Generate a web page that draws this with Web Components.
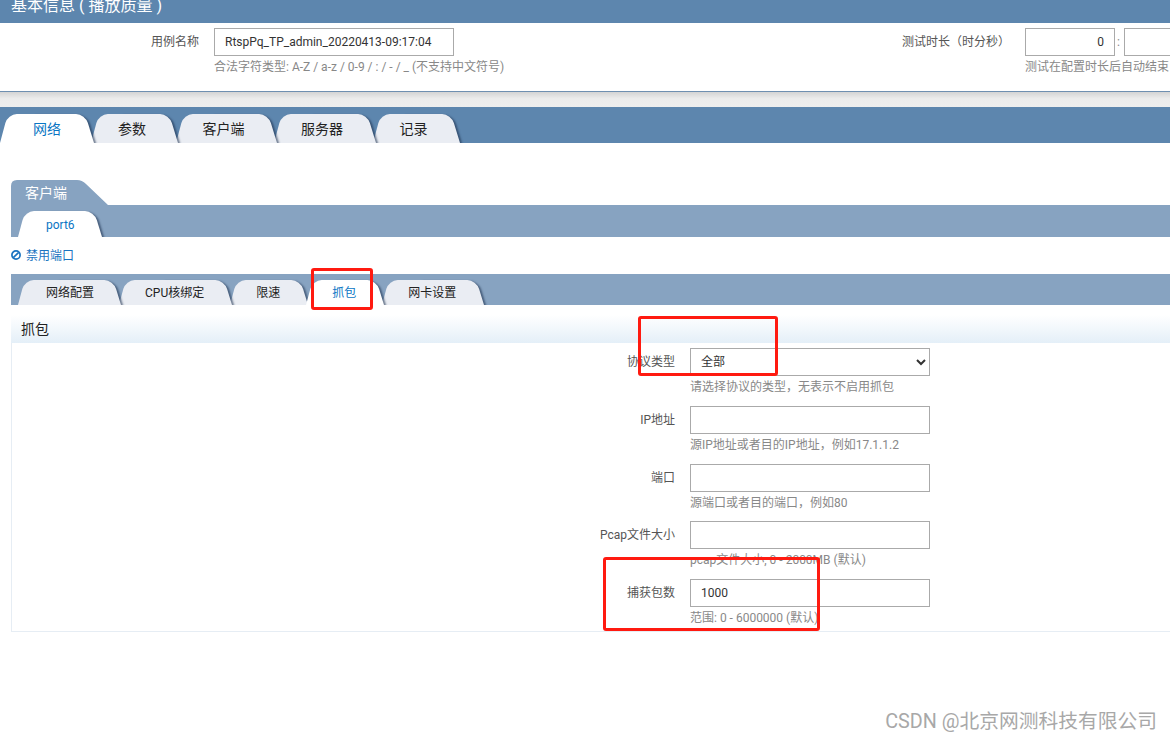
<!DOCTYPE html>
<html lang="zh">
<head>
<meta charset="utf-8">
<title>抓包</title>
<style>
    html, body { margin: 0; background: #fff; }
    body {
        width: 1170px;
        height: 740px;
        overflow: hidden;
        position: relative;
        font-family: Roboto, "Noto Sans CJK SC", sans-serif;
        font-size: 12px;
    }
</style>
</head>
<body>
<info-panel></info-panel>

<tab-strip class="main">
    <tab-item active>网络</tab-item>
    <tab-item>参数</tab-item>
    <tab-item>客户端</tab-item>
    <tab-item>服务器</tab-item>
    <tab-item>记录</tab-item>
</tab-strip>

<client-pane>
    <tab-strip class="sub" slot="ports" style="height:32px;--tab-h:26px">
        <tab-item active>port6</tab-item>
    </tab-strip>
    <tab-strip class="sub" slot="tabs">
        <tab-item>网络配置</tab-item>
        <tab-item>CPU核绑定</tab-item>
        <tab-item>限速</tab-item>
        <tab-item active>抓包</tab-item>
        <tab-item>网卡设置</tab-item>
    </tab-strip>
    <form-section title="抓包">
        <form-field label="协议类型" hint="请选择协议的类型，无表示不启用抓包" type="select" value="全部"></form-field>
        <form-field label="IP地址" hint="源IP地址或者目的IP地址，例如17.1.1.2"></form-field>
        <form-field label="端口" hint="源端口或者目的端口，例如80"></form-field>
        <form-field label="Pcap文件大小" hint="pcap文件大小, 0 - 2000MB (默认)"></form-field>
        <form-field label="捕获包数" hint="范围: 0 - 6000000 (默认)" value="1000"></form-field>
    </form-section>
</client-pane>

<red-mark style="left:311px;top:268px;width:62px;height:42px"></red-mark>
<red-mark style="left:638px;top:316px;width:140px;height:60px"></red-mark>
<red-mark style="left:603px;top:557px;width:217px;height:74px"></red-mark>

<water-mark>CSDN @北京网测科技有限公司</water-mark>

<script>
class InfoPanel extends HTMLElement {
    constructor() {
        super();
        this.attachShadow({ mode: 'open' });
        this.shadowRoot.innerHTML = `
            <style>
                :host { display: block; }
                .title {
                    height: 23px;
                    overflow: hidden;
                    background: #5d86ae;
                    color: #fff;
                    font-size: 16px;
                    line-height: 16px;
                    padding-left: 11px;
                }
                .title span { display: block; margin-top: -2px; }
                .body {
                    box-sizing: border-box;
                    height: 69px;
                    padding-top: 5px;
                    border-bottom: 1px solid #6f8fb0;
                    display: grid;
                    grid-template-columns: 199px 255px 556px 105px 55px;
                    color: #555;
                    white-space: nowrap;
                }
                label { text-align: right; line-height: 28px; }
                .box {
                    box-sizing: border-box;
                    height: 28px;
                    line-height: 26px;
                    border: 1px solid #aaa;
                    color: #333;
                    padding: 0 10px;
                    background: #fff;
                }
                .name { margin-left: 15px; }
                .time { margin-left: 15px; width: 90px; }
                .hint { color: #888; line-height: 16px; margin-top: 3px; }
                .num { text-align: right; }
                .next { display: flex; color: #888; line-height: 28px; }
                .next span { flex: none; width: 9px; text-indent: 2px; }
                .next .box { width: 60px; flex: none; }
                .gap {
                    height: 15px;
                    background: linear-gradient(#d4d4d4, #ececec 45%, #eeeeee);
                }
            </style>
            <div class="title"><span>基本信息 ( 播放质量 )</span></div>
            <div class="body">
                <label>用例名称</label>
                <div class="name">
                    <div class="box">RtspPq_TP_admin_20220413-09:17:04</div>
                    <div class="hint">合法字符类型: A-Z / a-z / 0-9 / : / - / _ (不支持中文符号)</div>
                </div>
                <label>测试时长（时分秒）</label>
                <div class="time">
                    <div class="box num">0</div>
                    <div class="hint">测试在配置时长后自动结束</div>
                </div>
                <div class="next"><span>:</span><div class="box"></div></div>
            </div>
            <div class="gap"></div>
        `;
    }
}

class TabStrip extends HTMLElement {
    constructor() {
        super();
        this.attachShadow({ mode: 'open' });
        this.shadowRoot.innerHTML = `
            <style>
                :host {
                    display: flex;
                    align-items: flex-end;
                    overflow: hidden;
                    isolation: isolate;
                }
                :host(.main) {
                    height: 36px;
                    background: #5d86ae;
                    font-size: 14px;
                    --tab-h: 29px;
                    --tab-left: 27px;
                    --tab-right: 32.5px;
                    --tab-overlap: -3px;
                    --first-left: 33px;
                    --first-right: 33px;
                }
                :host(.sub) {
                    height: 31px;
                    background: #87a3c1;
                    font-size: 12px;
                    padding-left: 7px;
                    --tab-h: 25px;
                    --tab-left: 26px;
                    --tab-right: 28px;
                    --tab-overlap: -2px;
                    --first-left: 28px;
                    --first-right: 27px;
                }
                ::slotted(tab-item:first-child) {
                    margin-left: 0;
                    padding-left: var(--first-left);
                    padding-right: var(--first-right);
                }
                ::slotted(tab-item:nth-child(1)) { z-index: 5; }
                ::slotted(tab-item:nth-child(2)) { z-index: 4; }
                ::slotted(tab-item:nth-child(3)) { z-index: 3; }
                ::slotted(tab-item:nth-child(4)) { z-index: 2; }
                ::slotted(tab-item:nth-child(5)) { z-index: 1; }
                ::slotted(tab-item[active]) { z-index: 9; }
            </style>
            <slot></slot>
        `;
    }
}

class TabItem extends HTMLElement {
    constructor() {
        super();
        this.attachShadow({ mode: 'open' });
        this.shadowRoot.innerHTML = `
            <style>
                :host {
                    display: block;
                    position: relative;
                    height: var(--tab-h);
                    line-height: calc(var(--tab-h) + 2px);
                    padding: 0 var(--tab-right) 0 var(--tab-left);
                    margin-left: var(--tab-overlap);
                    color: #222;
                    white-space: nowrap;
                    --tab-bg: #eaedf3;
                }
                :host([active]) { color: #0a76c4; --tab-bg: #fff; }
                .l, .r {
                    position: absolute;
                    top: 0;
                    bottom: 0;
                    background: var(--tab-bg);
                }
                .l {
                    left: 0;
                    right: 45%;
                    border-radius: 9px 0 0 0;
                    transform: skewX(-15deg);
                    transform-origin: bottom left;
                }
                .r {
                    left: 45%;
                    right: 0;
                    border-radius: 0 9px 0 0;
                    transform: skewX(17deg);
                    transform-origin: bottom right;
                    box-shadow: 2px 1px 2px rgba(30, 50, 80, .6);
                }
                span { position: relative; }
            </style>
            <div class="r"></div>
            <div class="l"></div>
            <span><slot></slot></span>
        `;
    }
}

class ClientPane extends HTMLElement {
    constructor() {
        super();
        this.attachShadow({ mode: 'open' });
        this.shadowRoot.innerHTML = `
            <style>
                :host { display: block; padding: 37px 0 0 11px; }
                .head {
                    width: 97px;
                    height: 25px;
                    background: #87a3c1;
                    color: #fff;
                    font-size: 14px;
                    line-height: 27px;
                    text-indent: 14px;
                    clip-path: path('M0 25 V6 Q0 0 6 0 H66 Q71 0 75 4 L97 25 Z');
                }
                .off {
                    display: flex;
                    align-items: center;
                    gap: 5px;
                    height: 35px;
                    padding-bottom: 2px;
                    color: #1a73c0;
                }
                svg { width: 10px; height: 10px; }
                .section { margin-top: 10px; }
            </style>
            <div class="head">客户端</div>
            <slot name="ports"></slot>
            <div class="off">
                <svg viewBox="0 0 10 10" fill="none" stroke="#1a73c0" stroke-width="1.7"><circle cx="5" cy="5" r="4.1"/><path d="M2.3 7.7 7.7 2.3"/></svg>
                <span>禁用端口</span>
            </div>
            <slot name="tabs"></slot>
            <div class="section"><slot></slot></div>
        `;
    }
}

class FormSection extends HTMLElement {
    constructor() {
        super();
        this.attachShadow({ mode: 'open' });
        this.shadowRoot.innerHTML = `
            <style>
                :host { display: block; }
                .title {
                    height: 28px;
                    box-sizing: border-box;
                    padding-left: 10px;
                    line-height: 28px;
                    font-size: 14px;
                    color: #222;
                    background: linear-gradient(#fff, #e4eff8);
                }
                .fields {
                    height: 289px;
                    box-sizing: border-box;
                    padding-top: 5px;
                    border-left: 1px solid #e6edf4;
                    border-bottom: 1px solid #e6edf4;
                }
            </style>
            <div class="title"></div>
            <div class="fields"><slot></slot></div>
        `;
        this.shadowRoot.querySelector('.title').textContent = this.getAttribute('title');
    }
}

class FormField extends HTMLElement {
    constructor() {
        super();
        this.attachShadow({ mode: 'open' });
        const value = this.getAttribute('value') || '';
        const control = this.getAttribute('type') === 'select'
            ? `<select><option>${value}</option></select>`
            : `<input type="text" value="${value}">`;
        this.shadowRoot.innerHTML = `
            <style>
                :host {
                    display: grid;
                    grid-template-columns: 663px 240px;
                    column-gap: 15px;
                    height: 57.75px;
                    align-content: start;
                }
                label { text-align: right; line-height: 28px; color: #555; white-space: nowrap; }
                input, select {
                    box-sizing: border-box;
                    width: 240px;
                    height: 28px;
                    margin: 0;
                    border: 1px solid #aaa;
                    border-radius: 0;
                    background: #fff;
                    color: #333;
                    font: inherit;
                    outline: none;
                }
                input { padding: 0 10px; }
                select { padding: 0 6px; }
                .hint { grid-column: 2; color: #888; line-height: 16px; margin-top: 3px; white-space: nowrap; }
            </style>
            <label>${this.getAttribute('label')}</label>
            ${control}
            <div class="hint">${this.getAttribute('hint')}</div>
        `;
    }
}

class RedMark extends HTMLElement {
    constructor() {
        super();
        this.attachShadow({ mode: 'open' });
        this.shadowRoot.innerHTML = `
            <style>
                :host {
                    position: absolute;
                    box-sizing: border-box;
                    border: 3px solid #ff1a10;
                    border-radius: 3px;
                    z-index: 5;
                }
            </style>
        `;
    }
}

class WaterMark extends HTMLElement {
    constructor() {
        super();
        this.attachShadow({ mode: 'open' });
        this.shadowRoot.innerHTML = `
            <style>
                :host {
                    position: absolute;
                    right: 13px;
                    top: 709px;
                    font-size: 19.75px;
                    line-height: 26px;
                    color: #a8a8a8;
                    white-space: nowrap;
                }
            </style>
            <slot></slot>
        `;
    }
}

customElements.define('info-panel', InfoPanel);
customElements.define('tab-strip', TabStrip);
customElements.define('tab-item', TabItem);
customElements.define('client-pane', ClientPane);
customElements.define('form-section', FormSection);
customElements.define('form-field', FormField);
customElements.define('red-mark', RedMark);
customElements.define('water-mark', WaterMark);
</script>
</body>
</html>
